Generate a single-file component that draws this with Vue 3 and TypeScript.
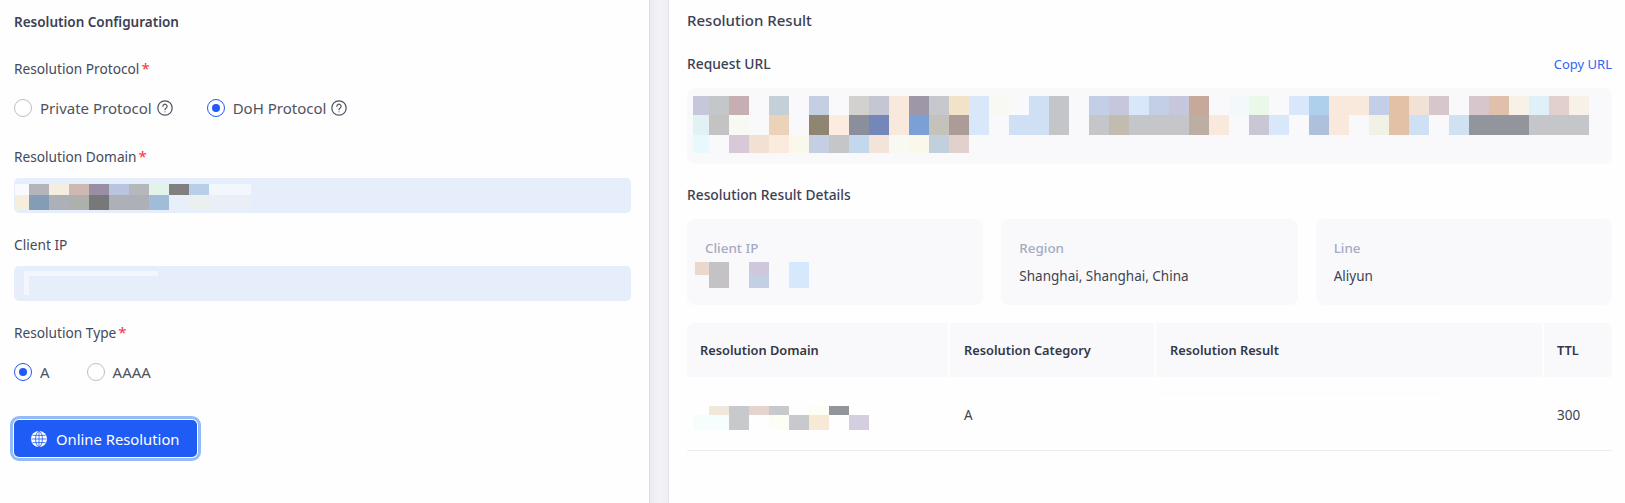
<script setup lang="ts">
const _ = ''

// pixelated (redacted) text, one array per row, '' = no cell
const domainRows = [
  ['#f8faff', '#b4b5b9', '#f3eee0', '#cdb9b1', '#9a8da6', '#b9c5e0', '#b6b7bb', '#e2f4ea', '#808080', '#b8cfe9', '#f2f6fd', '#f2f6fd'],
  ['#f5eedd', '#859cb6', '#adb0b6', '#aeb0ac', '#777879', '#adb0b6', '#adb0b6', '#a0bcd9', '#e9eff8', '#eaf0f0', '#e9eef7', '#e9eef7'],
]

const urlRows = [
  ['#c7c7dc', '#c3c7ca', '#c7aeb3', _, '#c3d0d8', _, '#c5cfe3', _, '#d2d1cd', '#c4c6d3', '#f9e9dc', '#9e97a8', '#c7c8cd', '#f2e2c8', '#d8e8fa', '#f9f9f4', _, '#cfdff4', '#c4c5c9', _, '#c3cfe6', '#c6c6dc', '#d8e8fa', '#c3cfe6', '#c6c6dc', '#c6a99b', _, '#f3f8fa', '#e9f8e8', _, '#d8e8fa', '#aed0ec', '#f9e9dc', '#f9e9dc', '#c3cfe6', '#e3c1a6', '#f2e2d6', '#d7c6cc', _, '#d7c6cc', '#e0bfab', '#f8f1e7', '#e0f0f8', '#e2d0cd', '#f8f1e7'],
  ['#e2f1f4', '#c3c3c3', '#f9f9f4', _, '#ebd2b8', _, '#8f8570', '#fcecdf', '#8b8f9b', '#7387b8', '#f9e9dc', '#7ba0d6', '#c3c3bb', '#ab9c97', '#d8e8fa', _, '#cfdff4', '#cfdff4', '#c4c5c9', _, '#c5c6ca', '#c2bcb0', '#c5c6ca', '#c5c6ca', '#c5c6ca', '#bcaea2', '#f9e9dc', _, '#c9c7d6', '#d8e8fa', _, '#aec0dc', '#f9e9dc', _, '#f1f2e4', '#e3c1a6', '#cfe0f4', _, '#d0e1f2', '#92959c', '#92959c', '#92959c', '#c5c6ca', '#c5c6ca', '#c5c6ca'],
  ['#e8f9fd', _, '#d8c9d8', '#f2e0d3', '#fbeade', '#f9f8ea', '#c5cfe3', '#c5c6ca', '#c3d8ec', '#f4e3d8', '#f9f9f4', '#f9f8ea', '#c2cfdc', '#e2d0cd'],
]

const ipRows = [
  ['#e9d8cb', '#c5c2c6', _, '#cfc7dc', _, '#d6e8fb'],
  [_, '#c5c2c6', _, '#c3cfe3', _, '#d6e8fb'],
]

const tableRows = [
  [_, '#f0e8da', '#c8c9cc', '#e4d4cd', '#c8c9cc', _, '#fdfdf6', '#93959c', _],
  ['#f5fefd', '#f5fefd', '#c8c9cc', _, '#fcfdf5', '#c8c9cc', '#f8e8d6', _, '#d5cde0'],
]
</script>

<template>
  <div class="page">
    <section class="config">
      <h3 class="config-title">Resolution Configuration</h3>

      <div class="form-item item-protocol">
        <div class="label">Resolution Protocol<i>*</i></div>
        <div class="radios">
          <label class="radio"><span class="dot"></span>Private Protocol
            <svg class="help" viewBox="0 0 16 16" fill="none" stroke="#4b4f5c" stroke-width="1.2">
              <circle cx="8" cy="8" r="7.2" />
              <path d="M5.9 6.3a2.1 2.1 0 1 1 3.3 1.7c-.8.5-1.2.9-1.2 1.7" stroke-linecap="round" />
              <path d="M8 11.4v.9" />
            </svg>
          </label>
          <label class="radio on"><span class="dot"></span>DoH Protocol
            <svg class="help" viewBox="0 0 16 16" fill="none" stroke="#4b4f5c" stroke-width="1.2">
              <circle cx="8" cy="8" r="7.2" />
              <path d="M5.9 6.3a2.1 2.1 0 1 1 3.3 1.7c-.8.5-1.2.9-1.2 1.7" stroke-linecap="round" />
              <path d="M8 11.4v.9" />
            </svg>
          </label>
        </div>
      </div>

      <div class="form-item item-domain">
        <div class="label">Resolution Domain<i>*</i></div>
        <div class="input domain-input">
          <div v-for="(row, r) in domainRows" :key="r" class="mosaic-row" :class="'domain-row-' + r">
            <span v-for="(c, i) in row" :key="i" class="cell" :style="{ background: c }"></span>
          </div>
        </div>
      </div>

      <div class="form-item item-ip">
        <div class="label">Client IP</div>
        <div class="input ip-input">
          <span class="ip-bar"></span>
          <span class="ip-stem"></span>
        </div>
      </div>

      <div class="form-item item-type">
        <div class="label">Resolution Type<i>*</i></div>
        <div class="radios type-radios">
          <label class="radio on"><span class="dot"></span>A</label>
          <label class="radio"><span class="dot"></span>AAAA</label>
        </div>
      </div>

      <button class="primary">
        <svg class="globe" viewBox="0 0 16 16">
          <circle cx="8" cy="8" r="8" fill="#fff" />
          <g fill="none" stroke="#1f5bf5" stroke-width=".8">
            <ellipse cx="8" cy="8" rx="3.4" ry="7.6" />
            <path d="M8 .4v15.2M.6 8h14.8M1.6 4.4h12.8M1.6 11.6h12.8" />
          </g>
        </svg>
        Online Resolution
      </button>
    </section>

    <div class="gutter"></div>

    <section class="result">
      <h3 class="result-title">Resolution Result</h3>
      <div class="url-head">
        <span class="sub-title">Request URL</span>
        <a class="copy">Copy URL</a>
      </div>
      <div class="url-box">
        <div v-for="(row, r) in urlRows" :key="r" class="mosaic-row" :class="'url-row-' + r">
          <span v-for="(c, i) in row" :key="i" class="cell" :style="{ background: c }"></span>
        </div>
      </div>

      <div class="sub-title details-title">Resolution Result Details</div>
      <div class="cards">
        <div class="card">
          <div class="card-label">Client IP</div>
          <div class="ip-mosaic">
            <div v-for="(row, r) in ipRows" :key="r" class="mosaic-row ip-row">
              <span v-for="(c, i) in row" :key="i" class="cell" :style="{ background: c }"></span>
            </div>
          </div>
        </div>
        <div class="card">
          <div class="card-label">Region</div>
          <div class="card-value">Shanghai, Shanghai, China</div>
        </div>
        <div class="card">
          <div class="card-label">Line</div>
          <div class="card-value">Aliyun</div>
        </div>
      </div>

      <div class="table">
        <div class="th">Resolution Domain</div>
        <div class="th wide-pad">Resolution Category</div>
        <div class="th wide-pad">Resolution Result</div>
        <div class="th">TTL</div>
        <div class="td td-domain">
          <div v-for="(row, r) in tableRows" :key="r" class="mosaic-row" :class="'table-row-' + r">
            <span v-for="(c, i) in row" :key="i" class="cell" :style="{ background: c }"></span>
          </div>
        </div>
        <div class="td td-text wide-pad">A</div>
        <div class="td td-result"><span class="faint"></span></div>
        <div class="td td-text">300</div>
      </div>
    </section>
  </div>
</template>

<style>
html, body { background: #fff; }
</style>

<style scoped>
.page {
  display: flex; width: 1625px; height: 503px; overflow: hidden;
  background: #fefefe; color: #4a4e5e;
  font-family: "Noto Sans", sans-serif; font-size: 14px;
}

/* --- left --- */
.config { width: 649px; box-sizing: border-box; padding: 0 18px 0 14px; }
.config-title, .result-title {
  margin: 0; font-weight: 600; color: #3c4154; line-height: 20px;
}
.config-title { font-size: 13.5px; padding-top: 12px; margin-bottom: 26px; }

.form-item { display: flex; flex-direction: column; }
.item-protocol { margin-bottom: 27px; }
.item-domain { margin-bottom: 20px; }
.item-ip { margin-bottom: 21px; }
.item-type { margin-bottom: 37px; }

.label { height: 22px; line-height: 20px; font-size: 13.7px; color: #454a5a; }
.item-ip .label { line-height: 24px; }
.label i { color: #f5343f; font-style: normal; font-size: 15px; margin-left: 2px; }

.radios { display: flex; gap: 34px; height: 22px; margin-top: 17px; }
.type-radios { gap: 37px; }
.radio { display: flex; align-items: center; color: #50535f; font-size: 15px; }
.dot {
  width: 18px; height: 18px; box-sizing: border-box; border-radius: 50%;
  border: 1px solid #bcbfc7; margin-right: 8px; background: #fff; position: relative;
}
.radio.on .dot { border-color: #1f5bf5; }
.radio.on .dot::after {
  content: ''; position: absolute; inset: 4px; border-radius: 50%; background: #1f5bf5;
}
.help { width: 16px; height: 16px; margin-left: 5px; }

.input { height: 35px; border-radius: 5px; background: #e7eefb; margin-top: 10px; }
.ip-input { margin-top: 11px; position: relative; }
.domain-input { padding: 6px 1px 0; box-sizing: border-box; }
.ip-bar { position: absolute; left: 10px; top: 5px; width: 134px; height: 5px; background: #f3f6fd; }
.ip-stem { position: absolute; left: 10px; top: 5px; width: 5px; height: 24px; background: #f3f6fd; }

.mosaic-row { display: flex; height: 20px; }
.cell { width: 20px; flex: none; height: 100%; }
.cell:first-child { width: 16px; }
.domain-row-0 { height: 11px; }
.domain-row-1 { height: 15px; }
.domain-row-0 .cell:first-child, .domain-row-1 .cell:first-child { width: 14px; }
.domain-row-0 .cell:nth-child(n + 11), .domain-row-1 .cell:nth-child(n + 11) { width: 21px; }

.primary {
  display: flex; align-items: center; width: 183px; height: 37px; padding: 0 0 0 17px;
  border: 0; border-radius: 5px; background: #1f5bf5; color: #fff;
  font: inherit; font-size: 14.8px;
  box-shadow: 0 0 0 1px #fff, 0 0 0 4px #93bbfa;
}
.globe { width: 16px; height: 16px; margin-right: 9px; }

.gutter {
  width: 20px; box-sizing: border-box; flex: none;
  background: linear-gradient(90deg, #eaebf2, #f3f3f7 50%, #eeeef4);
  border-left: 1px solid #d9dae4; border-right: 1px solid #e3e4ec;
}

/* --- right --- */
.result { flex: 1; box-sizing: border-box; padding: 0 13px 0 18px; min-width: 0; }
.result-title { font-size: 15px; font-weight: 500; padding-top: 10px; margin-bottom: 24px; }
.sub-title { font-size: 13.8px; font-weight: 500; color: #3c4154; line-height: 20px; }
.url-head { display: flex; justify-content: space-between; align-items: center; height: 20px; }
.copy { color: #2f66f6; font-size: 13px; }

.url-box {
  height: 76px; margin-top: 14px; box-sizing: border-box; padding: 8px 6px 0;
  border-radius: 8px; background: #f9f9fb;
}
.url-row-0 { height: 19px; }
.url-row-2 { height: 18px; }

.details-title { margin-top: 21px; height: 20px; }
.cards { display: grid; grid-template-columns: repeat(3, 1fr); gap: 18px; margin-top: 14px; }
.card {
  height: 86px; box-sizing: border-box; padding: 19px 18px 0;
  border-radius: 8px; background: #f9f9fb;
}
.card-label { font-size: 13.4px; font-weight: 500; color: #a4aac2; line-height: 20px; }
.card-value { margin-top: 8px; font-size: 13.5px; line-height: 20px; color: #3f4352; }
.ip-mosaic { margin: 4px 0 0 -10px; }
.ip-row { height: 13px; }
.ip-row .cell:first-child { width: 14px; }

.table { display: grid; grid-template-columns: 261px 204px 386px 68px; column-gap: 2px; margin-top: 18px; }
.th {
  height: 54px; display: flex; align-items: center; padding-left: 13px;
  background: #f9f9fb; font-size: 12.8px; font-weight: 600; color: #333746;
}
.th:first-child { border-top-left-radius: 6px; }
.th:nth-child(4) { border-top-right-radius: 6px; }
.td { height: 74px; box-sizing: border-box; border-bottom: 1px solid #ececee; margin-right: -2px; }
.td-text { display: flex; align-items: center; padding: 2px 0 0 13px; font-size: 13.5px; color: #3f4352; }
.th.wide-pad, .td-text.wide-pad { padding-left: 14px; }
.td:nth-child(8) { margin-right: 0; }
.td-domain { padding: 29px 0 0 6px; }
.table-row-0 { height: 9px; }
.table-row-1 { height: 15px; }
.td-result { padding: 16px 0 0 7px; }
.faint { display: block; width: 279px; height: 1px; background: #fafafa; }
</style>
